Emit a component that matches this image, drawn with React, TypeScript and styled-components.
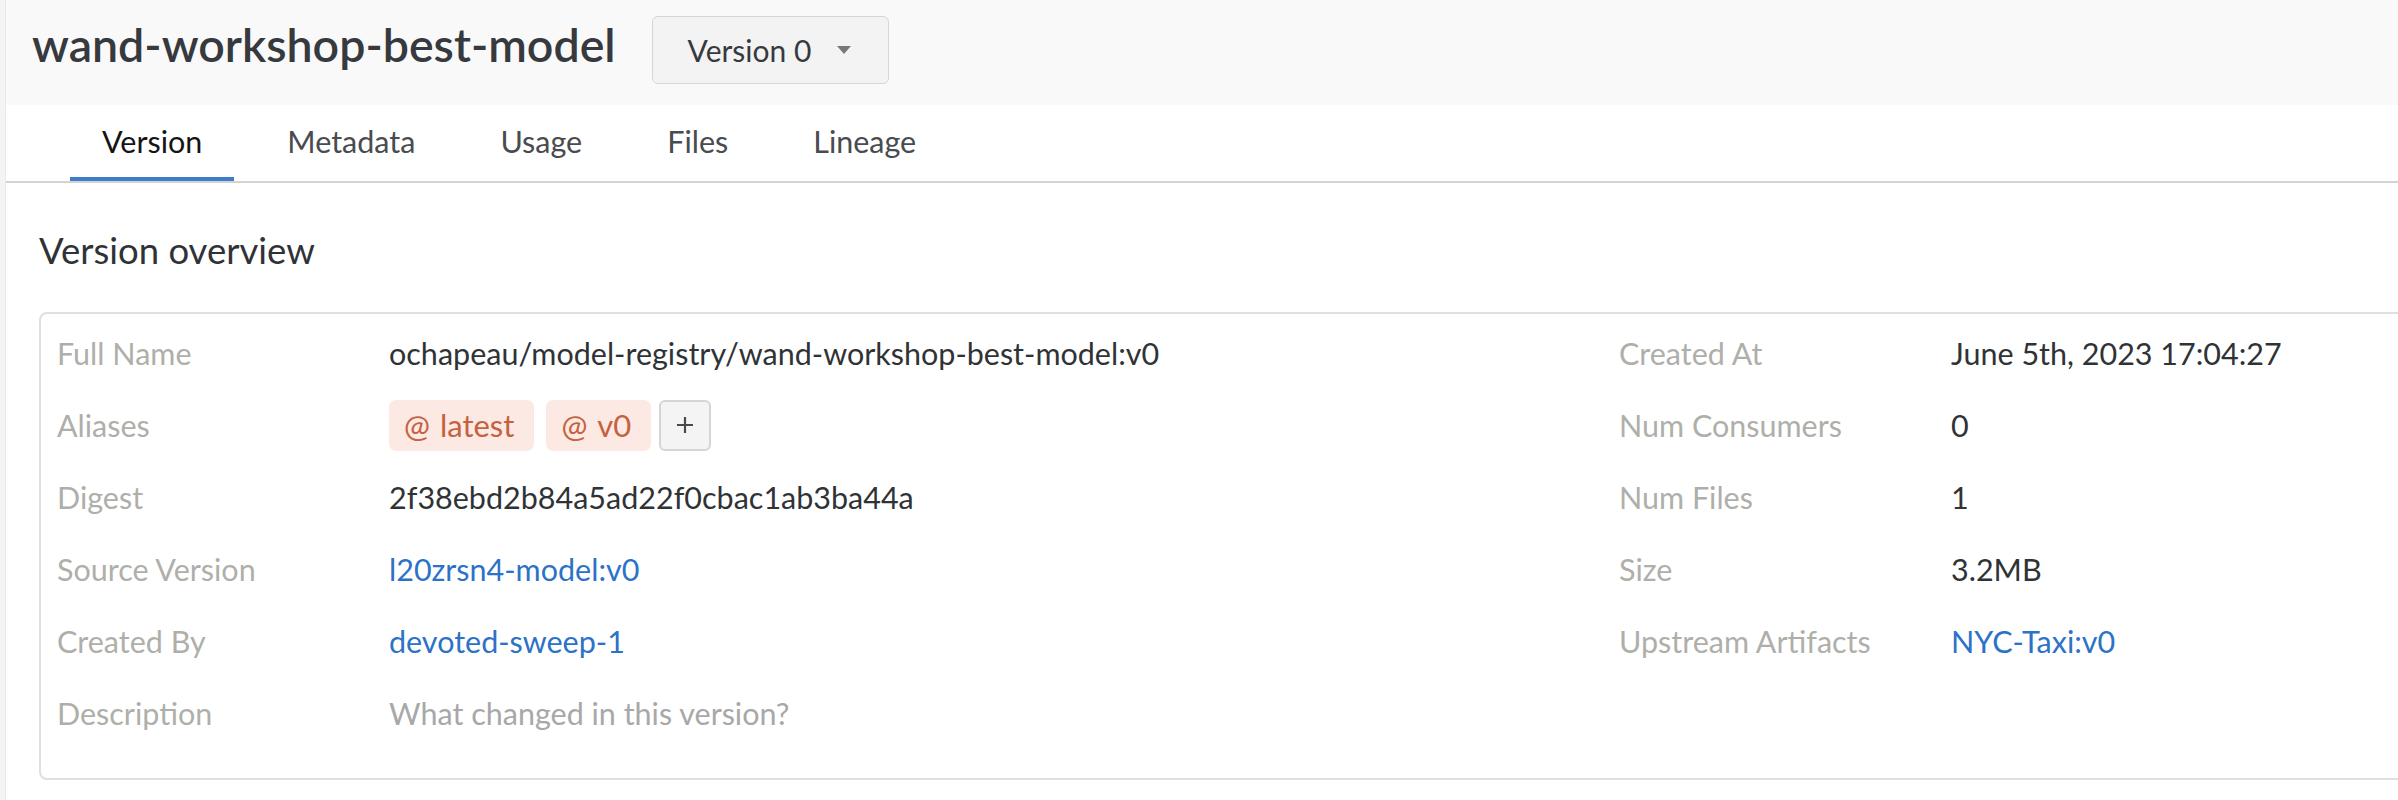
import React from "react";
import styled, { createGlobalStyle } from "styled-components";

const GlobalStyle = createGlobalStyle`
  html, body {
    margin: 0;
    padding: 0;
    overflow: hidden;
    background: #ffffff;
  }
  body {
    font-family: "Lato", "Noto Sans", sans-serif;
    color: #34383c;
  }
  * { box-sizing: border-box; }
`;

const Shell = styled.div`
  background: #f4f4f4;
  padding-left: 5px;
  min-height: 800px;
`;

const Main = styled.div`
  border-left: 1px solid #e8e8e8;
  background: #ffffff;
  min-height: 800px;
`;

const Header = styled.header`
  height: 105px;
  background: #f9f9f9;
  display: flex;
  align-items: flex-start;
  padding: 16px 0 0 26px;
  gap: 36px;
`;

const Title = styled.h1`
  margin: 0;
  font-size: 46.5px;
  line-height: 57px;
  font-weight: 600;
  color: #363a3f;
`;

const Dropdown = styled.button`
  height: 68px;
  display: flex;
  align-items: center;
  gap: 26px;
  padding: 0 37px 0 35px;
  background: #f3f3f3;
  border: 1px solid #d6d6d6;
  border-radius: 6px;
  font-family: inherit;
  font-size: 30px;
  line-height: 66px;
  color: #363a3f;
  cursor: pointer;
`;

const Tabs = styled.nav`
  display: flex;
  gap: 21px;
  padding-left: 64px;
  border-bottom: 2px solid #d4d4d4;
`;

const Tab = styled.div<{ $active?: boolean }>`
  height: 76px;
  padding: 0 32px;
  font-size: 30.5px;
  line-height: 72px;
  color: ${(p) => (p.$active ? "#141414" : "#484b4f")};
  border-bottom: 4px solid ${(p) => (p.$active ? "#3d7dca" : "transparent")};
  cursor: pointer;
`;

const Content = styled.section`
  padding: 43px 0 0 33px;
`;

const Heading = styled.h2`
  margin: 0 0 38px 0;
  font-size: 36.5px;
  line-height: 48px;
  font-weight: 400;
  color: #2f3337;
`;

const Card = styled.div`
  border: 2px solid #e0e0e0;
  border-radius: 8px;
  margin-right: -60px;
  padding: 3px 14px 29px 16px;
  display: grid;
  grid-template-columns: 1562px 1fr;
  align-items: start;
`;

const Fields = styled.div`
  display: grid;
  grid-template-columns: 332px 1fr;
  grid-auto-rows: 72px;
  align-items: center;
  line-height: 72px;
`;

const Label = styled.div`
  color: #afafaa;
  font-size: 30.5px;
`;

const Value = styled.div<{ $tone?: "link" | "muted" | "plain" }>`
  color: ${(p) =>
    p.$tone === "link" ? "#2c72c7" : p.$tone === "muted" ? "#a8a8a8" : "#2f3336"};
  font-size: 30.5px;
  display: flex;
  align-items: center;
  gap: 12px;
  white-space: nowrap;
`;

const Alias = styled.span`
  height: 51px;
  display: inline-flex;
  align-items: center;
  padding: 0 20px 0 15px;
  gap: 10px;
  background: #fce9e3;
  color: #c4623f;
  border-radius: 7px;
  font-size: 31px;
  line-height: 51px;
`;

const AddButton = styled.button`
  width: 52px;
  height: 51px;
  margin-left: -4px;
  display: inline-flex;
  align-items: center;
  justify-content: center;
  background: #f4f4f4;
  border: 2px solid #d5d5d5;
  border-radius: 6px;
  padding: 0;
  cursor: pointer;
`;

const Caret = () => (
  <svg width="14" height="8" viewBox="0 0 14 8">
    <path d="M0 0 H14 L7 8 Z" fill="#787878" />
  </svg>
);

const Plus = () => (
  <svg width="18" height="18" viewBox="0 0 18 18">
    <path d="M9 1 V17 M1 9 H17" stroke="#4a4a4a" strokeWidth="2.2" />
  </svg>
);

const tabs = ["Version", "Metadata", "Usage", "Files", "Lineage"];

export default function App() {
  return (
    <>
      <GlobalStyle />
      <Shell>
        <Main>
          <Header>
            <Title>wand-workshop-best-model</Title>
            <Dropdown>
              <span>Version 0</span>
              <Caret />
            </Dropdown>
          </Header>
          <Tabs>
            {tabs.map((t, i) => (
              <Tab key={t} $active={i === 0}>
                {t}
              </Tab>
            ))}
          </Tabs>
          <Content>
            <Heading>Version overview</Heading>
            <Card>
              <Fields>
                <Label>Full Name</Label>
                <Value>ochapeau/model-registry/wand-workshop-best-model:v0</Value>
                <Label>Aliases</Label>
                <Value>
                  <Alias>
                    <span>@</span>
                    <span>latest</span>
                  </Alias>
                  <Alias>
                    <span>@</span>
                    <span>v0</span>
                  </Alias>
                  <AddButton aria-label="Add alias">
                    <Plus />
                  </AddButton>
                </Value>
                <Label>Digest</Label>
                <Value>2f38ebd2b84a5ad22f0cbac1ab3ba44a</Value>
                <Label>Source Version</Label>
                <Value $tone="link">l20zrsn4-model:v0</Value>
                <Label>Created By</Label>
                <Value $tone="link">devoted-sweep-1</Value>
                <Label>Description</Label>
                <Value $tone="muted">What changed in this version?</Value>
              </Fields>
              <Fields>
                <Label>Created At</Label>
                <Value>June 5th, 2023 17:04:27</Value>
                <Label>Num Consumers</Label>
                <Value>0</Value>
                <Label>Num Files</Label>
                <Value>1</Value>
                <Label>Size</Label>
                <Value>3.2MB</Value>
                <Label>Upstream Artifacts</Label>
                <Value $tone="link">NYC-Taxi:v0</Value>
              </Fields>
            </Card>
          </Content>
        </Main>
      </Shell>
    </>
  );
}
